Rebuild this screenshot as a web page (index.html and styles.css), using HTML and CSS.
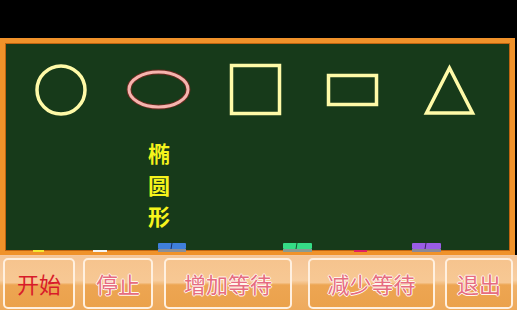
FILE: index.html
```html
<!DOCTYPE html>
<html lang="zh">
<head>
<meta charset="utf-8">
<link rel="stylesheet" href="styles.css">
</head>
<body>
<div class="screen">
  <div class="topbar"></div>
  <div class="board">
    <svg class="canvas" viewBox="5 43 505 209" width="505" height="209">
      <circle cx="61" cy="90" r="24" fill="none" stroke="#fffaa8" stroke-width="3.5"/>
      <ellipse cx="158.5" cy="89.5" rx="29.5" ry="17.5" fill="none" stroke="#6a2a20" stroke-width="5"/>
      <ellipse cx="158.5" cy="89.5" rx="29.5" ry="17.5" fill="none" stroke="#f6b4ae" stroke-width="3"/>
      <rect x="231.5" y="65.5" width="48" height="48" fill="none" stroke="#fffaa8" stroke-width="3.5"/>
      <rect x="328.5" y="75.5" width="48" height="29" fill="none" stroke="#fffaa8" stroke-width="3.5"/>
      <polygon points="449.5,68 426.5,113 472.5,113" fill="none" stroke="#fffaa8" stroke-width="3.5" stroke-linejoin="miter"/>
      <rect x="33" y="250" width="11" height="3" fill="#f4e830"/>
      <rect x="93" y="250" width="14" height="3" fill="#f4f4f4"/>
      <rect x="158" y="243" width="28" height="6" rx="1" fill="#3f7fdc"/>
      <rect x="158" y="249" width="28" height="3" fill="#8a8e98"/>
      <line x1="172" y1="243" x2="171" y2="249" stroke="#1a2a60" stroke-width="1"/>
      <rect x="283" y="243" width="29" height="6" rx="1" fill="#35dc86"/>
      <rect x="283" y="249" width="29" height="3" fill="#8a9a90"/>
      <line x1="297" y1="243" x2="296" y2="249" stroke="#1a5030" stroke-width="1"/>
      <rect x="354" y="250" width="13" height="3" fill="#e02060"/>
      <rect x="412" y="243" width="29" height="6" rx="1" fill="#9a5ce6"/>
      <rect x="412" y="249" width="29" height="3" fill="#8a8898"/>
      <line x1="426" y1="243" x2="425" y2="249" stroke="#3a2060" stroke-width="1"/>
    </svg>
    <div class="label">椭<br>圆<br>形</div>
  </div>
  <div class="buttons">
    <div class="btn b1 active">开始</div>
    <div class="btn b2">停止</div>
    <div class="btn b3">增加等待</div>
    <div class="btn b4">减少等待</div>
    <div class="btn b5">退出</div>
  </div>
</div>
</body>
</html>
```
FILE: styles.css
```css
html, body {
  margin: 0;
  padding: 0;
  background: #000;
}
.screen {
  width: 517px;
  height: 310px;
  overflow: hidden;
  display: flex;
  flex-direction: column;
  font-family: "Noto Sans CJK SC", "Noto Sans", sans-serif;
}
.topbar {
  height: 38px;
  background: #000;
}
.board {
  position: relative;
  width: 505px;
  height: 208px;
  border: 5px solid #f0922a;
  border-bottom-width: 4px;
  box-shadow: inset 0 0 0 1px #c06410;
  background: #173a1a;
}
.canvas {
  position: absolute;
  left: 0;
  top: 0;
  display: block;
}
.label {
  position: absolute;
  left: 141px;
  top: 94px;
  width: 26px;
  color: #f6f41c;
  font-size: 22px;
  font-weight: 700;
  line-height: 31.5px;
  text-align: center;
}
.buttons {
  flex: 1;
  display: flex;
  align-items: stretch;
  padding: 2px 0 1px 2px;
  background: linear-gradient(#f5c596 0%, #f8cfa2 45%, #f0b26a 55%, #eeaa5c 100%);
  border-top: 1px solid #f5c8a0;
}
.btn {
  box-sizing: border-box;
  display: flex;
  align-items: center;
  justify-content: center;
  border: 2px solid #fff0e0;
  border-radius: 5px;
  background: linear-gradient(#f6c48e 0%, #f7c894 48%, #eda552 53%, #eba24c 100%);
  font-size: 22px;
  color: #e66c80;
  text-shadow: 1px 0 0 #fff6ee, -1px 0 0 #fff6ee, 0 1px 0 #fff6ee, 0 -1px 0 #fff6ee;
  padding-bottom: 2px;
}
.btn.active {
  color: #d81c2a;
  text-shadow: none;
}
.b1 { width: 72px; margin-left: 1px; }
.b2 { width: 70px; margin-left: 8px; }
.b3 { width: 128px; margin-left: 11px; }
.b4 { width: 127px; margin-left: 16px; }
.b5 { width: 68px; margin-left: 10px; }
```
